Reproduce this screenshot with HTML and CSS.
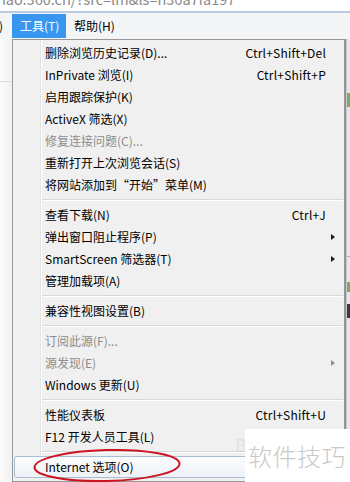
FILE: index.html
```html
<!DOCTYPE html>
<html lang="zh-CN">
<head>
<meta charset="utf-8">
<link rel="stylesheet" href="styles.css">
</head>
<body>
<div class="screen">
  <div class="addr"><span class="url">hao.360.cn/?src=lm&amp;ls=n36a7fa197</span></div>
  <div class="menubar">
    <span class="mb-item prev">)</span>
    <span class="mb-item active">工具(T)</span>
    <span class="mb-item">帮助(H)</span>
  </div>
  <div class="main">
    <div class="left-strip"><div class="ls-line"></div></div>
    <div class="menu">
      <div class="item"><span class="label">删除浏览历史记录(D)...</span><span class="key">Ctrl+Shift+Del</span></div>
      <div class="item"><span class="label">InPrivate 浏览(I)</span><span class="key">Ctrl+Shift+P</span></div>
      <div class="item"><span class="label">启用跟踪保护(K)</span></div>
      <div class="item"><span class="label">ActiveX 筛选(X)</span></div>
      <div class="item disabled"><span class="label">修复连接问题(C)...</span></div>
      <div class="item"><span class="label">重新打开上次浏览会话(S)</span></div>
      <div class="item"><span class="label">将网站添加到“开始”菜单(M)</span></div>
      <div class="sep"></div>
      <div class="item"><span class="label">查看下载(N)</span><span class="key">Ctrl+J</span></div>
      <div class="item"><span class="label">弹出窗口阻止程序(P)</span><span class="arrow"></span></div>
      <div class="item"><span class="label">SmartScreen 筛选器(T)</span><span class="arrow"></span></div>
      <div class="item"><span class="label">管理加载项(A)</span></div>
      <div class="sep"></div>
      <div class="item"><span class="label">兼容性视图设置(B)</span></div>
      <div class="sep"></div>
      <div class="item disabled"><span class="label">订阅此源(F)...</span></div>
      <div class="item disabled"><span class="label">源发现(E)</span><span class="arrow"></span></div>
      <div class="item"><span class="label">Windows 更新(U)</span></div>
      <div class="sep"></div>
      <div class="item"><span class="label">性能仪表板</span><span class="key">Ctrl+Shift+U</span></div>
      <div class="item"><span class="label">F12 开发人员工具(L)</span></div>
      <div class="sep"></div>
      <div class="item hover"><span class="label">Internet 选项(O)</span></div>
    </div>
    <div class="right-strip">
      <div class="rs-a"></div>
      <div class="rs-green"></div>
      <div class="rs-b"></div>
      <div class="rs-green small"></div>
      <div class="rs-dark"></div>
    </div>
  </div>
  <svg class="ring" width="152" height="36" viewBox="0 0 152 36">
    <ellipse cx="75" cy="17.5" rx="72.5" ry="15.5" fill="none" stroke="#cc1420" stroke-width="2" transform="rotate(-1.5 75 17.5)"/>
  </svg>
  <div class="wm-logo">B</div>
  <div class="watermark">软件技巧</div>
</div>
</body>
</html>
```

FILE: styles.css
```css
* { box-sizing: border-box; }
html, body { margin: 0; padding: 0; }
body {
  width: 350px;
  height: 482px;
  overflow: hidden;
  background: #ffffff;
  font-family: "Noto Sans CJK SC", "Noto Sans", sans-serif;
}
.screen {
  position: relative;
  width: 350px;
  height: 482px;
  overflow: hidden;
  display: flex;
  flex-direction: column;
}
.addr {
  height: 13px;
  overflow: hidden;
  background: #ffffff;
  border-bottom: 2px solid #b8cbe3;
}
.url {
  display: block;
  margin-top: -10px;
  margin-left: -3px;
  font-size: 14.5px;
  line-height: 17px;
  color: #8a8a8a;
  white-space: nowrap;
}
.menubar {
  height: 26px;
  flex: none;
  display: flex;
  align-items: flex-start;
  padding-top: 1px;
  background: #f4f5f7;
  font-size: 12px;
}
.mb-item {
  height: 24px;
  line-height: 24px;
  color: #000;
  padding: 0 8px;
}
.mb-item.prev { width: 12px; padding: 0; text-indent: -1px; }
.mb-item.active {
  background: #3797f0;
  color: #fff;
  width: 54px;
  padding: 0 0 0 8px;
}
.main {
  flex: 1;
  display: flex;
  min-height: 0;
}
.left-strip {
  width: 12px;
  flex: none;
  background: linear-gradient(to right, #fbfbfb, #f1f1f1);
  padding-top: 42px;
}
.ls-line {
  height: 1px;
  background: #dcdcdc;
}
.menu {
  width: 333px;
  flex: none;
  border: 1px solid #979797;
  padding: 2px 1px;
  background: linear-gradient(to right, #f1f1f1 0 27px, #e2e3e3 27px 28px, #ffffff 28px 29px, #f0f0f0 29px);
  font-size: 12px;
  color: #000;
}
.item {
  position: relative;
  height: 22px;
  line-height: 22px;
  display: flex;
  align-items: center;
  padding-left: 31px;
  padding-right: 17px;
  white-space: nowrap;
}
.item .label { flex: 1; }
.item .key { letter-spacing: 0.2px; }
.item.disabled { color: #8d8d8d; }
.arrow {
  width: 0;
  height: 0;
  border-top: 3.5px solid transparent;
  border-bottom: 3.5px solid transparent;
  border-left: 4px solid #1a1a1a;
  margin-right: -9px;
}
.item.disabled .arrow { border-left-color: #8d8d8d; }
.item.hover {
  border: 1px solid #a8bcd2;
  border-radius: 3px;
  background: linear-gradient(#fbfcfd, #eef1f5);
  padding-left: 30px;
}
.sep {
  height: 8px;
  margin-left: 28px;
  padding-top: 3px;
}
.sep::before {
  content: "";
  display: block;
  height: 1px;
  background: #d8d8d8;
  border-bottom: 1px solid #ffffff;
  box-sizing: content-box;
}
.right-strip {
  flex: 1;
  background: linear-gradient(to right, #8f8f8f 0 1px, #c9c9c9 1px 2px, #e6e6e6 2px);
  display: flex;
  flex-direction: column;
  padding-left: 2px;
}
.rs-a { height: 20px; }
.rs-green { height: 14px; margin-top: 34px; background: #7ea868; }
.rs-b { height: 150px; border-bottom: 1px solid #b0b0b0; }
.rs-green.small { height: 10px; margin-top: 25px; }
.rs-dark { height: 14px; margin-top: 12px; background: #3a3a3a; }
.ring {
  position: absolute;
  left: 32px;
  top: 448px;
}
.watermark {
  position: absolute;
  left: 245px;
  top: 429px;
  width: 105px;
  height: 53px;
  background: #ffffff;
  color: #c9c9c9;
  font-size: 24px;
  line-height: 53px;
  padding-left: 3px;
  letter-spacing: 0.5px;
  white-space: nowrap;
  font-family: "Noto Sans CJK SC", sans-serif;
  font-weight: 300;
}
.wm-logo {
  position: absolute;
  left: 235px;
  top: 436px;
  font-family: "DejaVu Sans", sans-serif;
  font-size: 18px;
  line-height: 20px;
  color: rgba(190, 190, 200, 0.3);
}
```
